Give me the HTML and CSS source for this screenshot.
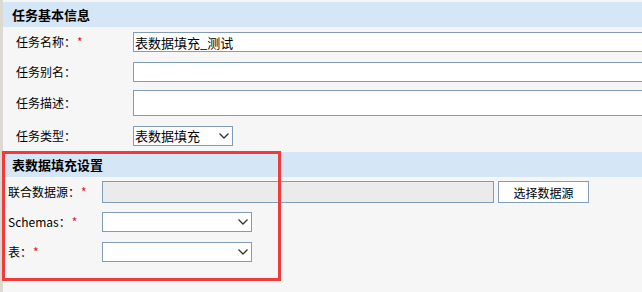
FILE: index.html
```html
<!DOCTYPE html>
<html lang="zh-CN">
<head>
<meta charset="UTF-8">
<title>任务设置</title>
<link rel="stylesheet" href="styles.css">
</head>
<body>
<div class="page">
  <div class="section basic">
    <h2 class="section-title">任务基本信息</h2>
    <div class="row r1">
      <label class="label">任务名称：<span class="req">*</span></label>
      <input type="text" class="field wide" value="表数据填充_测试">
    </div>
    <div class="row r2">
      <label class="label">任务别名：</label>
      <input type="text" class="field wide">
    </div>
    <div class="row r3">
      <label class="label">任务描述：</label>
      <input type="text" class="field wide tall">
    </div>
    <div class="row r4">
      <label class="label">任务类型：</label>
      <div class="select-wrap type">
        <select class="select"><option>表数据填充</option></select>
        <svg class="chevron" width="10" height="6" viewBox="0 0 10 6"><path d="M0.5 0.5 L5 5 L9.5 0.5" fill="none" stroke="#333" stroke-width="1.3"/></svg>
      </div>
    </div>
  </div>

  <div class="section fill">
    <h2 class="section-title">表数据填充设置</h2>
    <div class="row">
      <label class="label">联合数据源：<span class="req">*</span></label>
      <input type="text" class="field source" disabled>
      <button class="btn">选择数据源</button>
    </div>
    <div class="row">
      <label class="label">Schemas：<span class="req">*</span></label>
      <div class="select-wrap small">
        <select class="select"><option></option></select>
        <svg class="chevron" width="10" height="6" viewBox="0 0 10 6"><path d="M0.5 0.5 L5 5 L9.5 0.5" fill="none" stroke="#333" stroke-width="1.3"/></svg>
      </div>
    </div>
    <div class="row">
      <label class="label">表：<span class="req">*</span></label>
      <div class="select-wrap small">
        <select class="select"><option></option></select>
        <svg class="chevron" width="10" height="6" viewBox="0 0 10 6"><path d="M0.5 0.5 L5 5 L9.5 0.5" fill="none" stroke="#333" stroke-width="1.3"/></svg>
      </div>
    </div>
  </div>

  <div class="highlight"></div>
</div>
</body>
</html>
```

FILE: styles.css
```css
html, body { margin: 0; padding: 0; overflow: hidden; }
body { background: #f6f6f6; font-family: "Noto Sans CJK SC", sans-serif; font-size: 12px; color: #000; }
.page { position: relative; border-left: 3px solid #dcd8d2; height: 292px; padding-top: 2px; box-sizing: border-box; }

.section-title { margin: 0; height: 25px; line-height: 25px; padding-left: 9px; background: #d5e6f7; font-size: 13px; font-weight: bold; color: #000; }

.row { display: flex; align-items: center; height: 30px; }
.label { flex: none; line-height: 16px; }
.req { color: #e8102e; margin-left: 1px; font-size: 12px; }

.basic .label { width: 117px; padding-left: 13px; }
.basic .r3 { height: 32px; }
.basic .r4 { height: 33px; }
.fill .label { width: 94px; padding-left: 5px; }

.field { box-sizing: border-box; height: 20px; margin: 0; padding: 0 1px; border: 1px solid #7f9db9; background: #fff; font-family: "Noto Sans CJK SC", sans-serif; font-size: 13px; color: #000; outline: none; }
.wide { flex: none; width: 520px; }
.tall { height: 26px; }
.source { width: 392px; height: 22px; background: #ebebeb; }

.btn { box-sizing: border-box; width: 91px; height: 22px; margin-left: 4px; padding: 0; border: 1px solid #7f9db9; background: #fff; font-family: "Noto Sans CJK SC", sans-serif; font-size: 12px; color: #000; }

.select-wrap { position: relative; height: 20px; }
.select-wrap.type { width: 100px; }
.select-wrap.small { width: 150px; }
.select { appearance: none; -webkit-appearance: none; box-sizing: border-box; width: 100%; height: 20px; margin: 0; padding: 0 0 0 1px; border: 1px solid #7f9db9; border-radius: 0; background: #fff; font-family: "Noto Sans CJK SC", sans-serif; font-size: 13px; line-height: 18px; color: #000; outline: none; }
.chevron { position: absolute; right: 4px; top: 7px; pointer-events: none; }

.highlight { position: absolute; left: -1px; top: 151px; width: 279px; height: 130px; border: 3px solid #f03b3b; box-sizing: border-box; pointer-events: none; }
```
